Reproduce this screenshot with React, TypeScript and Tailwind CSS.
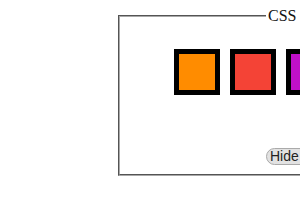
import React from 'react';

const colors = ['bg-[#ff8c00]', 'bg-[#f44336]', 'bg-[#c010c8]', 'bg-[#2196f3]'];

export default function App() {
    return (
        <div className="w-[300px] h-[210px] overflow-hidden bg-white">
            <fieldset className="ml-[118px] mt-[7px] w-[400px] h-[169px] border-2 border-[#a8a8a8] px-0 pb-0 pt-0" style={{ borderStyle: 'groove' }}>
                <legend className="ml-[146px] pl-[2px] pr-[12px] text-[16px] leading-[18px] text-[#111]" style={{ fontFamily: '"Liberation Serif", serif' }}>
                    CSS
                </legend>
                <div className="flex gap-[10px] ml-[54px] mt-[24px]">
                    {colors.map(c => (
                        <div key={c} className={`w-[46px] h-[46px] border-[5px] border-black ${c}`} />
                    ))}
                </div>
                <div className="ml-[146px] mt-[48px]">
                    <button className="h-[17px] pl-[3px] pr-[6px] rounded-full border border-[#aaa] bg-[#e2e2e2] text-[14px] leading-[15px] text-[#222]" style={{ fontFamily: '"Liberation Sans", Arial, sans-serif' }}>
                        Hide Squares
                    </button>
                </div>
            </fieldset>
        </div>
    );
}
